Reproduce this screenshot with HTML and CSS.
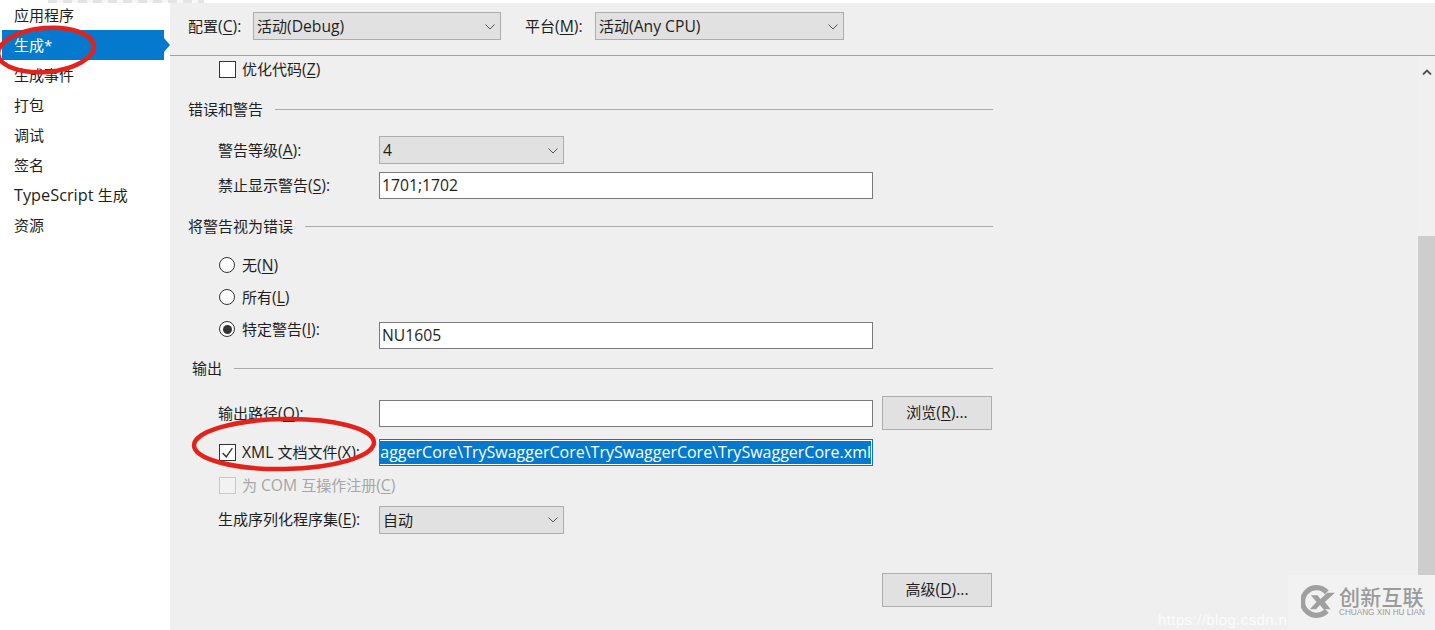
FILE: index.html
```html
<!DOCTYPE html>
<html lang="zh-CN">
<head>
<meta charset="utf-8">
<title>生成</title>
<link rel="stylesheet" href="styles.css">
</head>
<body>
<div class="window">
  <nav class="sidebar">
    <div class="nav-item">应用程序</div>
    <div class="nav-item active">生成*</div>
    <div class="nav-item">生成事件</div>
    <div class="nav-item">打包</div>
    <div class="nav-item">调试</div>
    <div class="nav-item">签名</div>
    <div class="nav-item"><span class="en nav-en">TypeScript </span>生成</div>
    <div class="nav-item">资源</div>
  </nav>
  <main class="main">
    <div class="topstrip"></div>
    <header class="toolbar">
      <span class="tb-label">配置<span class="en">(<u>C</u>):</span></span>
      <div class="select tb-select"><span>活动<span class="en">(Debug)</span></span><svg class="chev" viewBox="0 0 10 6"><path d="M.5.5 5 5 9.500.5"/></svg></div>
      <span class="tb-label tb-label2">平台<span class="en">(<u>M</u>):</span></span>
      <div class="select tb-select tb-select2"><span>活动<span class="en">(Any CPU)</span></span><svg class="chev" viewBox="0 0 10 6"><path d="M.5.5 5 5 9.500.5"/></svg></div>
    </header>
    <div class="body">
      <div class="form">
        <div class="row h26 indent"><span class="check"></span><span class="check-label">优化代码<span class="en">(<u>Z</u>)</span></span></div>

        <div class="heading m14"><span class="lift">错误和警告</span><i></i></div>
        <div class="row h28 indent m14"><span class="label">警告等级<span class="en">(<u>A</u>):</span></span><div class="select sel-s sel-low"><span class="en">4</span><svg class="chev" viewBox="0 0 10 6"><path d="M.5.5 5 5 9.500.5"/></svg></div></div>
        <div class="row h27 indent m8"><span class="label lift">禁止显示警告<span class="en">(<u>S</u>):</span></span><div class="input en">1701;1702</div></div>

        <div class="heading m14"><span class="lift">将警告视为错误</span><i></i></div>
        <div class="row h26 indent m13"><span class="radio"></span><span class="check-label">无<span class="en">(<u>N</u>)</span></span></div>
        <div class="row h26 indent m6"><span class="radio"></span><span class="check-label">所有<span class="en">(<u>L</u>)</span></span></div>
        <div class="row h27 indent m12 raised">
          <div class="label radio-label"><span class="radio on"></span><span class="check-label">特定警告<span class="en">(<u>I</u>):</span></span></div>
          <div class="input en">NU1605</div>
        </div>

        <div class="heading m6 heading-out"><span class="lift">输出</span><i></i></div>
        <div class="row h34 indent m15"><span class="label">输出路径<span class="en">(<u>O</u>):</span></span><div class="input"></div><button class="btn browse" type="button">浏览<span class="en">(<u>R</u>)...</span></button></div>
        <div class="row h27 indent m9">
          <div class="label radio-label"><span class="check checked"><svg viewBox="0 0 14 14"><path d="M2.500 7.500 5.800 11 11.500 3"/></svg></span><span class="check-label lift"><span class="en">XML </span>文档文件<span class="en">(<u>X</u>):</span></span></div>
          <div class="input selected"><span class="en">aggerCore\TrySwaggerCore\TrySwaggerCore\TrySwaggerCore.xml</span></div>
        </div>
        <div class="row h26 indent m6 disabled"><span class="check"></span><span class="check-label">为 <span class="en">COM </span>互操作注册<span class="en">(<u>C</u>)</span></span></div>
        <div class="row h28 indent m8"><span class="label lift">生成序列化程序集<span class="en">(<u>E</u>):</span></span><div class="select sel-s"><span>自动</span><svg class="chev" viewBox="0 0 10 6"><path d="M.5.5 5 5 9.500.5"/></svg></div></div>
        <div class="row-end"><button class="btn" type="button">高级<span class="en">(<u>D</u>)...</span></button></div>
      </div>
      <aside class="scrollbar">
        <svg class="up" viewBox="0 0 10 6"><path d="M1 5.500 5 1.500 9 5.500"/></svg>
        <div class="thumb"></div>
      </aside>
    </div>
  </main>
</div>

<div class="clipped-line"></div>

<svg class="marks" viewBox="0 0 1435 630">
  <ellipse cx="46" cy="50" rx="48" ry="22" transform="rotate(-5 46 50)"/>
  <ellipse cx="284" cy="444" rx="90" ry="25" transform="rotate(-1 284 444)"/>
</svg>

<div class="csdn">https://blog.csdn.n</div>
<div class="brand">
  <svg class="brand-logo" viewBox="0 0 36 36">
    <path d="M28.500 6.500A17 17 0 1 0 28.500 29.500L24.500 25.500A11.500 11.500 0 1 1 24.500 10.500Z" fill="#a0a0a0"/>
    <path d="M10 11.500h7l3 4 7-6.500h8l-10.500 9.500 6 7.500h-7.500l-3.500-4.500-4 4.500h-6.500l7-7.500Z" fill="#a0a0a0"/>
  </svg>
  <div class="brand-text"><b>创新互联</b><small>CHUANG XIN HU LIAN</small></div>
</div>
</body>
</html>
```
FILE: styles.css
```css
* { box-sizing: border-box; }
html, body { margin: 0; height: 100%; overflow: hidden; background: #fff; }
body { font-family: "Open Sans", "Noto Sans CJK SC", sans-serif; font-size: 15px; color: #1e1e1e; position: relative; }
u { text-underline-offset: 2px; text-decoration-thickness: 1px; }
.en { font-size: 15.700px; }
.nav-en { font-size: 16.300px; }

.window { display: flex; width: 1435px; height: 630px; }

.sidebar { width: 170px; flex: none; background: #fff; }
.nav-item { height: 30px; line-height: 30px; padding-left: 14px; white-space: nowrap; }
.nav-item.active { position: relative; width: 162px; margin-left: 2px; padding-left: 12px; background: #0579cd; color: #fff; }
.nav-item.active::after {
  content: ""; position: absolute; left: 100%; top: 50%; margin-top: -7px;
  border-left: 6px solid #0579cd; border-top: 7px solid transparent; border-bottom: 7px solid transparent;
}

.main { flex: 1; min-width: 0; display: flex; flex-direction: column; background: #efefef; }
.topstrip { height: 3px; background: #fff; }
.toolbar { height: 53px; flex: none; display: flex; align-items: flex-start; padding: 9px 0 0 18px; border-bottom: 1px solid #a3a3a3; }
.tb-label { width: 65px; line-height: 28px; white-space: nowrap; }
.tb-label2 { width: 70px; margin-left: 24px; }
.tb-select { width: 248px; padding-bottom: 0; }
.tb-select2 { width: 249px; }

.select { height: 28px; display: flex; align-items: center; justify-content: space-between; padding: 0 5px 2px 3px; background: #e1e1e1; border: 1px solid #adadad; }
.tb-select, .sel-low { padding-bottom: 0; }
.chev { width: 10px; height: 6px; margin-top: 2px; fill: none; stroke: #555; stroke-width: 1; }
.sel-s { width: 185px; }

.body { flex: 1; min-height: 0; display: flex; }
.form { width: 823px; flex: none; }
.row { display: flex; align-items: center; white-space: nowrap; }
.indent { padding-left: 48px; }
.h26 { height: 26px; } .h27 { height: 27px; } .h28 { height: 28px; } .h34 { height: 34px; }
.m6 { margin-top: 6px; } .m8 { margin-top: 8px; } .m9 { margin-top: 9px; } .m12 { margin-top: 12px; }
.m13 { margin-top: 13px; } .m14 { margin-top: 14px; } .m15 { margin-top: 15px; }

.heading { height: 26px; display: flex; align-items: center; gap: 12px; padding-left: 18px; white-space: nowrap; }
.heading i { flex: 1; height: 1px; background: #a9a9a9; }
.heading-out { padding-left: 22px; }
.lift { padding-bottom: 2px; }

.label { width: 161px; flex: none; }
.radio-label { display: flex; align-items: center; }
.raised .radio-label { align-self: flex-start; height: 14px; }
.check-label { margin-left: 6px; }
.label .check-label { white-space: nowrap; }

.check { width: 17px; height: 17px; flex: none; margin-left: 1px; border: 1px solid #333; background: #fff; display: block; }
.check svg { display: block; width: 15px; height: 15px; fill: none; stroke: #333; stroke-width: 1.300; }
.radio { width: 16px; height: 16px; flex: none; margin-left: 1px; margin-right: 1px; border: 1px solid #333; border-radius: 50%; background: #fff; position: relative; }
.radio.on::after { content: ""; position: absolute; inset: 2.500px; border-radius: 50%; background: #333; }

.input { width: 494px; height: 27px; flex: none; background: #fff; border: 1px solid #7a7a7a; line-height: 24px; padding-left: 2px; overflow: hidden; white-space: nowrap; }
.input.selected { display: flex; justify-content: flex-end; padding: 1px; border-color: #0579cd; line-height: 23px; }
.input.selected span { flex: none; background: #0579cd; color: #fff; font-size: 16px; }

.btn { font: inherit; color: inherit; width: 110px; height: 34px; padding: 0 0 2px; background: #e1e1e1; border: 1px solid #adadad; }
.browse { margin-left: 9px; }
.row-end { margin-top: 39px; padding-left: 712px; }

.disabled { color: #a6a6a6; }
.disabled .check { border-color: #c8c8c8; background: #f2f2f2; }

.scrollbar { position: relative; margin-left: auto; width: 17px; background: #f0f0f0; display: flex; flex-direction: column; align-items: center; }
.up { width: 10px; height: 6px; margin-top: 13px; fill: none; stroke: #505050; stroke-width: 1.800; }
.thumb { width: 100%; height: 339px; margin-top: 161px; background: #cdcdcd; }

.clipped-line { position: absolute; left: 48px; top: 0; width: 156px; height: 3px; background: repeating-linear-gradient(90deg, #e4e4e4 0 9px, #f7f7f7 9px 15px); }

.marks { position: absolute; left: 0; top: 0; width: 1435px; height: 630px; pointer-events: none; }
.marks ellipse { fill: none; stroke: #e3231b; stroke-width: 4.500; }

.csdn { position: absolute; left: 1158px; top: 610px; font: 15px/20px "Liberation Sans", sans-serif; color: #fff; opacity: .75; letter-spacing: .4px; }
.brand { position: absolute; left: 1288px; top: 575px; width: 147px; height: 55px; background: #f2f2f2; display: flex; align-items: flex-start; gap: 3px; padding: 9px 0 0 13px; }
.brand-logo { width: 35px; height: 35px; flex: none; }
.brand-text { display: flex; flex-direction: column; color: #9a9a9a; }
.brand-text b { font: 500 21px/25px "Noto Sans CJK SC", sans-serif; letter-spacing: .2px; }
.brand-text small { font: 8.200px/8px "Liberation Sans", sans-serif; white-space: nowrap; }
```
